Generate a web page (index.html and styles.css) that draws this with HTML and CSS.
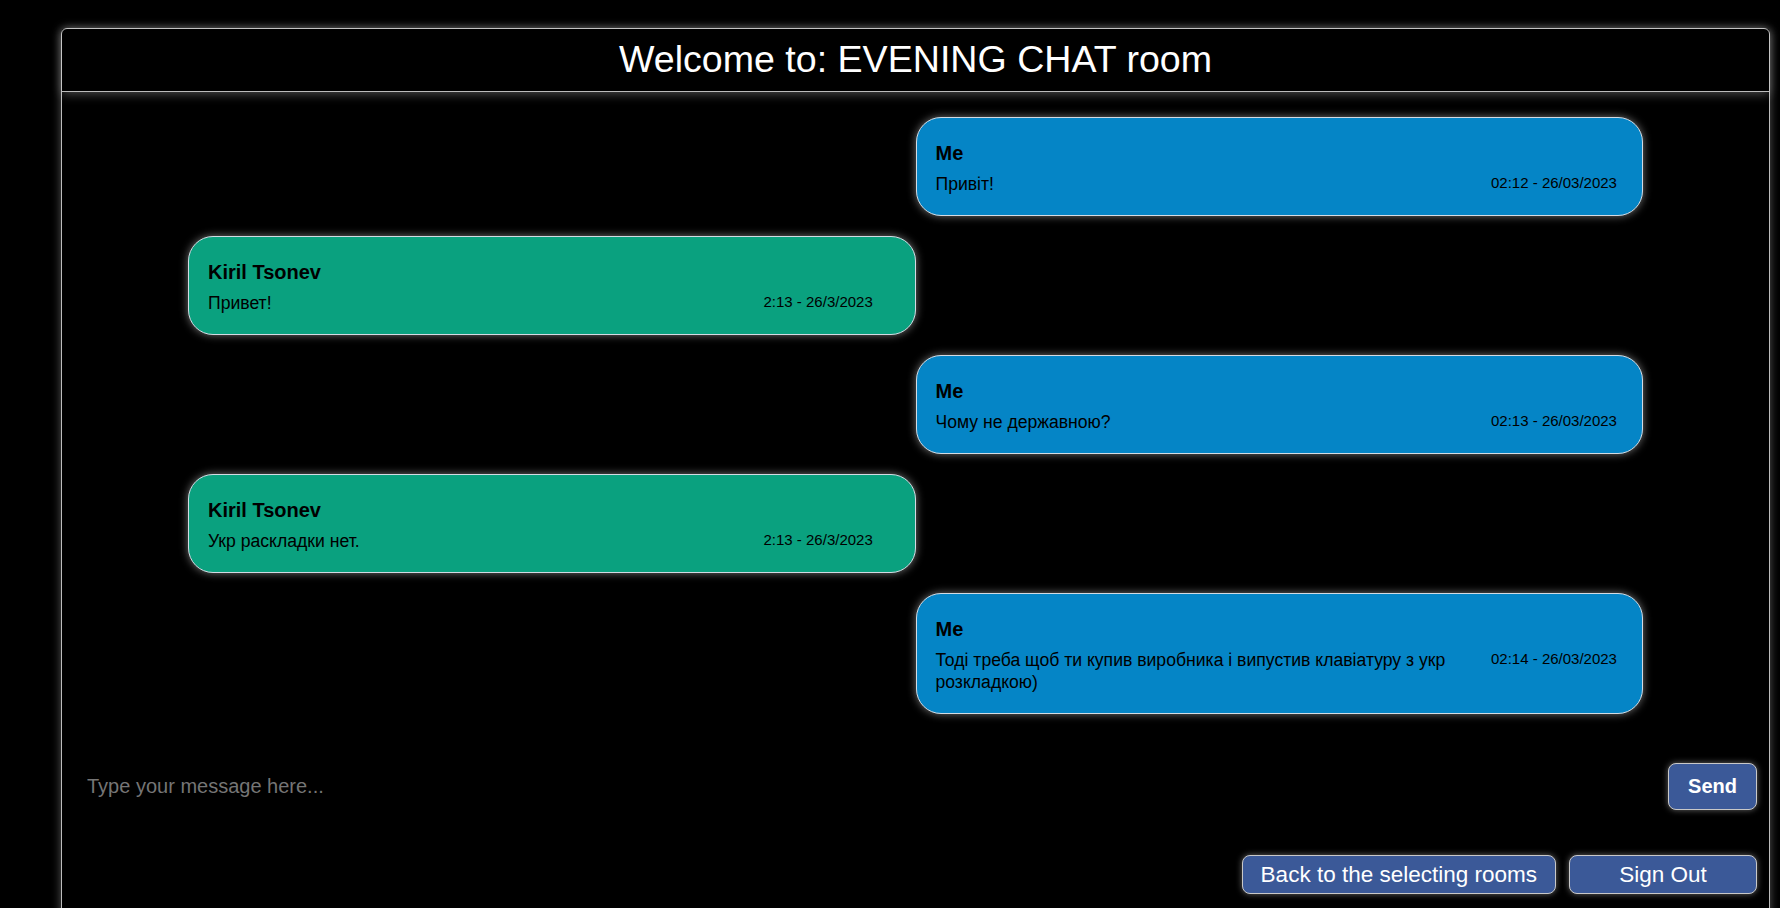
FILE: index.html
```html
<!DOCTYPE html>
<html lang="en">
<head>
<meta charset="utf-8">
<title>Evening Chat</title>
<link rel="stylesheet" href="styles.css">
</head>
<body>
<div class="chat">
  <header class="chat-header">
    <h1 class="chat-title">Welcome to: EVENING CHAT room</h1>
  </header>
  <main class="messages">
    <div class="msg mine">
      <div class="msg-name">Me</div>
      <div class="msg-body"><p class="msg-text">Привіт!</p><span class="msg-time">02:12 - 26/03/2023</span></div>
    </div>
    <div class="msg theirs">
      <div class="msg-name">Kiril Tsonev</div>
      <div class="msg-body"><p class="msg-text">Привет!</p><span class="msg-time">2:13 - 26/3/2023</span></div>
    </div>
    <div class="msg mine">
      <div class="msg-name">Me</div>
      <div class="msg-body"><p class="msg-text">Чому не державною?</p><span class="msg-time">02:13 - 26/03/2023</span></div>
    </div>
    <div class="msg theirs">
      <div class="msg-name">Kiril Tsonev</div>
      <div class="msg-body"><p class="msg-text">Укр раскладки нет.</p><span class="msg-time">2:13 - 26/3/2023</span></div>
    </div>
    <div class="msg mine">
      <div class="msg-name">Me</div>
      <div class="msg-body"><p class="msg-text">Тоді треба щоб ти купив виробника і випустив клавіатуру з укр розкладкою)</p><span class="msg-time">02:14 - 26/03/2023</span></div>
    </div>
  </main>
  <form class="composer">
    <input class="composer-input" type="text" placeholder="Type your message here..." autofocus>
    <button class="btn btn-send" type="button">Send</button>
  </form>
  <div class="actions">
    <button class="btn btn-action" type="button">Back to the selecting rooms</button>
    <button class="btn btn-action btn-signout" type="button">Sign Out</button>
  </div>
</div>
</body>
</html>
```
FILE: styles.css
```css
html, body {
  margin: 0;
  height: 100%;
  overflow: hidden;
  background: #000;
}

body {
  font-family: "Liberation Sans", Arial, sans-serif;
  color: #fff;
}

.chat {
  margin: 28px 10px 0 61px;
  border: 1px solid #bdbdbd;
  border-radius: 6px;
  box-shadow: 0 0 10px rgba(255, 255, 255, 0.35);
  padding-bottom: 40px;
}

.chat-header {
  border-bottom: 1px solid #bdbdbd;
  box-shadow: 0 2px 10px rgba(255, 255, 255, 0.3);
  padding: 9px 0 10px;
  text-align: center;
}

.chat-title {
  margin: 0;
  font-size: 37.6px;
  font-weight: normal;
  line-height: 43px;
  color: #fff;
}

.messages {
  width: 85.24%;
  margin: 0 auto;
  padding: 25px 0 49px;
  display: flex;
  flex-direction: column;
  gap: 20px;
}

.msg {
  width: 50%;
  box-sizing: border-box;
  border: 1px solid #d3dbe3;
  border-radius: 25px;
  padding: 24px 26px 20px 19px;
  box-shadow: 0 0 8px rgba(255, 255, 255, 0.45);
  color: #000;
}

.msg.mine {
  align-self: flex-end;
  background: #0585c6;
}

.msg.theirs {
  align-self: flex-start;
  background: #0aa17f;
}

.msg-name {
  font-weight: bold;
  font-size: 20px;
  line-height: 22px;
  margin-bottom: 9px;
}

.msg-body {
  display: grid;
  grid-template-columns: 1fr 125px;
  column-gap: 20px;
  align-items: start;
}

.msg-text {
  margin: 0;
  font-size: 17.6px;
  line-height: 22px;
}

.msg-time {
  font-size: 15px;
  line-height: 19px;
  white-space: nowrap;
}

.composer {
  display: flex;
  align-items: center;
  padding: 0 12px 0 25px;
  margin: 0;
}

.composer-input {
  flex: 1;
  background: transparent;
  border: none;
  outline: none;
  padding: 0;
  font-family: "Liberation Sans", Arial, sans-serif;
  font-size: 20px;
  color: #fff;
  caret-color: #fff;
}

.composer-input::placeholder {
  color: #757575;
}

.btn {
  background: #3b5998;
  color: #fff;
  border: 1px solid #c8c8c8;
  border-radius: 8px;
  box-shadow: 0 0 6px rgba(255, 255, 255, 0.4);
  font-family: "Liberation Sans", Arial, sans-serif;
  cursor: pointer;
}

.btn-send {
  font-size: 20px;
  font-weight: bold;
  line-height: 23px;
  padding: 11px 19px;
}

.actions {
  display: flex;
  justify-content: flex-end;
  gap: 13px;
  padding: 45px 12px 0;
}

.btn-action {
  font-size: 22.5px;
  line-height: 25px;
  padding: 6px 18px;
}

.btn-signout {
  width: 188px;
}
```
